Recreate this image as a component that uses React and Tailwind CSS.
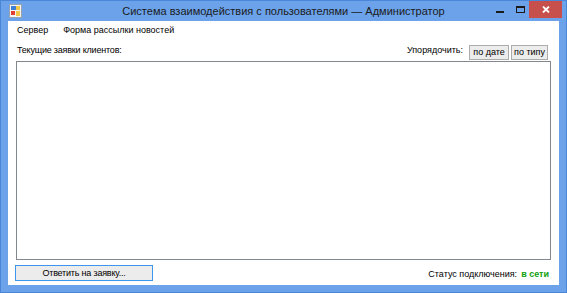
import React from "react";

function AppIcon() {
  return (
    <svg width="13" height="14" viewBox="0 0 13 14">
      <rect x="0.5" y="0.5" width="12" height="13" fill="#f4f4f4" stroke="#9aa3ad" />
      <rect x="2" y="2" width="5" height="4" fill="#3f7fd6" />
      <rect x="7" y="2" width="4" height="4" fill="#f2c84b" />
      <rect x="2" y="7" width="4" height="4" fill="#e04034" />
      <rect x="7" y="7" width="4" height="5" fill="#f2c84b" />
    </svg>
  );
}

function SortButton({ w, children }) {
  return (
    <div className={`${w} h-[15px] flex items-center justify-center bg-[#ececec] border border-[#acacac] text-[9px] leading-none`}>
      {children}
    </div>
  );
}

export default function App() {
  return (
    <div
      className="w-[567px] h-[293px] flex flex-col bg-[#6ba2ea] border border-[#4a86d8] text-black"
      style={{ fontFamily: '"Liberation Sans", Arial, sans-serif' }}
    >
      {/* title bar */}
      <div className="h-[20px] grid grid-cols-[1fr_auto_1fr] items-start">
        <div className="pl-[8px] pt-[3px]">
          <AppIcon />
        </div>
        <div className="whitespace-nowrap text-[11px] leading-[21px] text-[#1b1b1b]">
          Система взаимодействия с пользователями — Администратор
        </div>
        <div className="flex items-start justify-end">
          <div className="w-[22px] h-[17px] flex items-center justify-center">
            <div className="w-[8px] h-[2px] bg-[#1b1b1b] mt-[4px]" />
          </div>
          <div className="w-[18px] h-[17px] flex items-center justify-center">
            <div className="w-[9px] h-[7px] border border-[#1b1b1b] border-t-2 mb-[1px]" />
          </div>
          <div className="w-[33px] h-[17px] bg-[#c7504c] flex items-center justify-center mr-[4px]">
            <svg width="8" height="7" viewBox="0 0 8 7">
              <path d="M1 0.5 L7 6.5 M7 0.5 L1 6.5" stroke="#fff" strokeWidth="1.8" />
            </svg>
          </div>
        </div>
      </div>

      {/* client area */}
      <div className="flex-1 mx-[7px] mb-[7px] bg-white flex flex-col">
        {/* menu strip */}
        <div className="h-[20px] flex items-center gap-[15px] pl-[9px] text-[9px]">
          <span>Сервер</span>
          <span>Форма рассылки новостей</span>
        </div>

        {/* header row */}
        <div className="h-[20px] flex items-center pl-[9px] pr-[11px] text-[9px]">
          <span className="flex-1 tracking-[-0.2px]">Текущие заявки клиентов:</span>
          <span className="mr-[6px]">Упорядочить:</span>
          <div className="flex gap-[2px] pt-[2px]">
            <SortButton w="w-[40px]">по дате</SortButton>
            <SortButton w="w-[37px]">по типу</SortButton>
          </div>
        </div>

        {/* list */}
        <div className="mx-[8px] h-[199px] border border-[#828790] bg-white" />

        {/* bottom row */}
        <div className="flex items-center pl-[7px] pr-[10px] mt-[5px]">
          <div className="w-[138px] h-[16px] border border-[#3c96ee] bg-[#ececec] flex items-center justify-center text-[9px] tracking-[-0.2px]">
            Ответить на заявку...
          </div>
          <div className="flex-1 flex justify-end items-center text-[9px] pt-[3px]">
            <span>Статус подключения:</span>
            <span className="ml-[4px] font-bold text-[#10a010]">в сети</span>
          </div>
        </div>
      </div>
    </div>
  );
}
